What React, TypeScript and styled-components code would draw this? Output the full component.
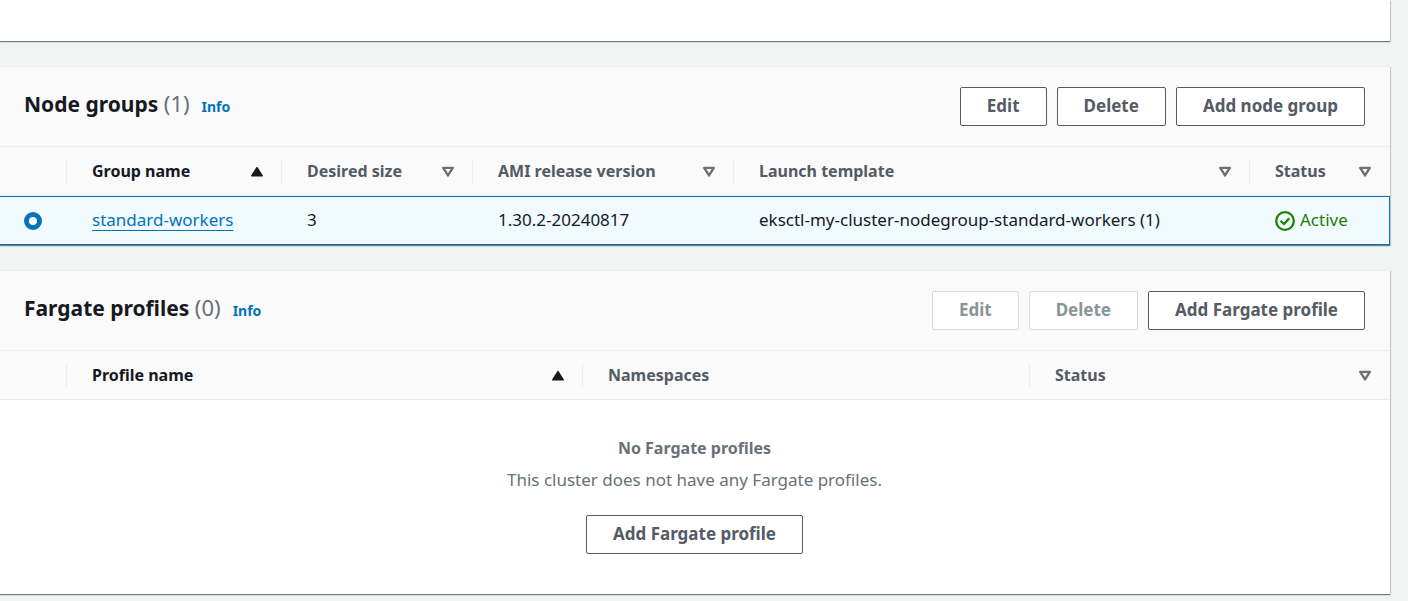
import React, { useState } from "react";
import styled, { createGlobalStyle } from "styled-components";

const color = {
  text: "#16191f",
  label: "#545b64",
  muted: "#687078",
  link: "#0073bb",
  success: "#1d8102",
  disabled: "#879596",
  line: "#eaeded",
  page: "#f2f3f3",
  header: "#fafafa",
  selected: "#f1faff",
};

const GlobalStyle = createGlobalStyle`
  *, *::before, *::after { box-sizing: border-box; }
  body {
    margin: 0;
    background: ${color.page};
    color: ${color.text};
    font-family: "Noto Sans", "Open Sans", sans-serif;
    font-size: 17px;
    line-height: 25px;
  }
`;

const Page = styled.main`
  display: flex;
  flex-direction: column;
  gap: 25px;
  padding: 0 18px 6px 0;
`;

const Panel = styled.section`
  background: #fff;
  border-top: 1px solid ${color.line};
  box-shadow:
    0 1px 1px 0 rgba(0, 28, 36, 0.3),
    1px 1px 1px 0 rgba(0, 28, 36, 0.15),
    -1px 1px 1px 0 rgba(0, 28, 36, 0.15),
    0 1px 0 0 rgba(0, 28, 36, 0.1);
`;

const PreviousPanel = styled(Panel)`
  min-height: 41px;
  border-top: 0;
`;

const PanelHeader = styled.header`
  display: flex;
  align-items: flex-start;
  justify-content: space-between;
  gap: 20px;
  padding: 20px 25px 20px 24px;
  background: ${color.header};
  border-bottom: 1px solid ${color.line};
`;

const TitleGroup = styled.div`
  display: flex;
  align-items: baseline;
  gap: 12px;
`;

const Title = styled.h2`
  margin: 0;
  font-size: 21px;
  font-weight: 700;
  line-height: 32px;
`;

const Count = styled.span`
  color: ${color.muted};
  font-size: 22px;
  font-weight: 400;
`;

const InfoLink = styled.a`
  color: ${color.link};
  font-size: 14px;
  font-weight: 700;
  text-decoration: none;
`;

const Actions = styled.div`
  display: flex;
  gap: 10px;
`;

const Button = styled.button`
  height: 39px;
  padding: 0 26px 2px;
  border: 1px solid ${color.label};
  border-radius: 2px;
  background: #fff;
  color: ${color.label};
  font: inherit;
  font-weight: 700;
  white-space: nowrap;
  cursor: pointer;

  &:disabled {
    border-color: #d5dbdb;
    color: ${color.disabled};
    cursor: default;
  }
`;

const Table = styled.table`
  width: 100%;
  table-layout: fixed;
  border-collapse: separate;
  border-spacing: 0;
`;

const Col = styled.col<{ $width?: string }>`
  width: ${(p) => p.$width ?? "auto"};
`;

const HeadCell = styled.th<{ $active?: boolean }>`
  padding: 12px 0 11px;
  background: ${color.header};
  border-bottom: 1px solid ${color.line};
  color: ${(p) => (p.$active ? color.text : color.label)};
  font-size: 16px;
  font-weight: 700;
  text-align: left;
`;

const HeadInner = styled.div<{ $last?: boolean }>`
  display: flex;
  align-items: center;
  justify-content: space-between;
  height: 25px;
  padding: 0 ${(p) => (p.$last ? 18 : 17)}px 0 25px;
  border-right: ${(p) => (p.$last ? "0" : `1px solid ${color.line}`)};
  white-space: nowrap;
`;

const Cell = styled.td<{ $control?: boolean }>`
  height: 49px;
  padding: ${(p) => (p.$control ? "0 0 0 24px" : "0 0 3px 25px")};
  background: ${color.selected};
  border: solid ${color.link};
  border-width: 1px 0;
  white-space: nowrap;

  &:last-child {
    border-right-width: 1px;
  }
`;

const Radio = styled.input`
  display: block;
  appearance: none;
  width: 18px;
  height: 18px;
  margin: 0;
  border: 1px solid ${color.muted};
  border-radius: 50%;
  background: #fff;

  &:checked {
    border: 5px solid ${color.link};
  }
`;

const NameLink = styled.a`
  color: ${color.link};
  text-decoration: underline 1px;
  text-decoration-skip-ink: none;
  text-underline-offset: 4px;
`;

const Status = styled.span`
  display: flex;
  align-items: center;
  gap: 5px;
  color: ${color.success};

  svg {
    margin-top: 3px;
  }
`;

const Empty = styled.div`
  display: flex;
  flex-direction: column;
  align-items: center;
  padding: 36px 26px 40px 25px;
  color: ${color.muted};
`;

const EmptyTitle = styled.strong`
  font-size: 16px;
  font-weight: 700;
`;

const EmptyText = styled.p`
  margin: 6px 0 23px;
`;

const SortIcon = styled.svg`
  display: block;
  flex: none;
  width: 14px;
  height: 12px;
`;

const SortAscending = () => (
  <SortIcon viewBox="0 0 14 12" aria-hidden="true">
    <path d="M7 1.6 12.3 9.8H1.7Z" fill={color.text} stroke={color.text} strokeWidth="1.4" strokeLinejoin="round" />
  </SortIcon>
);

const SortNone = () => (
  <SortIcon viewBox="0 0 14 12" aria-hidden="true">
    <path d="M2.2 1.9H11.8L7 9.4Z" fill="none" stroke={color.muted} strokeWidth="2.4" strokeLinejoin="round" />
  </SortIcon>
);

const CheckIcon = () => (
  <svg width="20" height="20" viewBox="0 0 20 20" fill="none" stroke={color.success} strokeWidth="2.3" aria-hidden="true">
    <circle cx="10" cy="10" r="8.8" />
    <path d="M5.6 9.9 9 13 14.2 7.4" />
  </svg>
);

type Column = { label: string; width?: string; sort?: "asc" | "none" };

const groupColumns: Column[] = [
  { label: "Group name", width: "215px", sort: "asc" },
  { label: "Desired size", width: "191px", sort: "none" },
  { label: "AMI release version", width: "261px", sort: "none" },
  { label: "Launch template", sort: "none" },
  { label: "Status", width: "140px", sort: "none" },
];

const fargateColumns: Column[] = [
  { label: "Profile name", width: "516px", sort: "asc" },
  { label: "Namespaces", width: "447px" },
  { label: "Status", sort: "none" },
];

const TableHead = ({ columns }: { columns: Column[] }) => (
  <>
    <colgroup>
      <Col $width="67px" />
      {columns.map((c) => (
        <Col key={c.label} $width={c.width} />
      ))}
    </colgroup>
    <thead>
      <tr>
        <HeadCell aria-label="Selection">
          <HeadInner />
        </HeadCell>
        {columns.map((c, i) => (
          <HeadCell
            key={c.label}
            scope="col"
            $active={c.sort === "asc"}
            aria-sort={c.sort === "asc" ? "ascending" : undefined}
          >
            <HeadInner $last={i === columns.length - 1}>
              {c.label}
              {c.sort === "asc" && <SortAscending />}
              {c.sort === "none" && <SortNone />}
            </HeadInner>
          </HeadCell>
        ))}
      </tr>
    </thead>
  </>
);

const Heading = ({ title, count }: { title: string; count: number }) => (
  <TitleGroup>
    <Title>
      {title} <Count>({count})</Count>
    </Title>
    <InfoLink href="#info">Info</InfoLink>
  </TitleGroup>
);

export default function App() {
  const [selected, setSelected] = useState("standard-workers");

  return (
    <>
      <GlobalStyle />
      <Page>
        <PreviousPanel />

        <Panel>
          <PanelHeader>
            <Heading title="Node groups" count={1} />
            <Actions>
              <Button type="button">Edit</Button>
              <Button type="button">Delete</Button>
              <Button type="button">Add node group</Button>
            </Actions>
          </PanelHeader>
          <Table>
            <TableHead columns={groupColumns} />
            <tbody>
              <tr>
                <Cell $control>
                  <Radio
                    type="radio"
                    name="node-group"
                    aria-label="standard-workers"
                    checked={selected === "standard-workers"}
                    onChange={() => setSelected("standard-workers")}
                  />
                </Cell>
                <Cell>
                  <NameLink href="#standard-workers">standard-workers</NameLink>
                </Cell>
                <Cell>3</Cell>
                <Cell>1.30.2-20240817</Cell>
                <Cell>eksctl-my-cluster-nodegroup-standard-workers (1)</Cell>
                <Cell>
                  <Status>
                    <CheckIcon />
                    Active
                  </Status>
                </Cell>
              </tr>
            </tbody>
          </Table>
        </Panel>

        <Panel>
          <PanelHeader>
            <Heading title="Fargate profiles" count={0} />
            <Actions>
              <Button type="button" disabled>Edit</Button>
              <Button type="button" disabled>Delete</Button>
              <Button type="button">Add Fargate profile</Button>
            </Actions>
          </PanelHeader>
          <Table>
            <TableHead columns={fargateColumns} />
          </Table>
          <Empty>
            <EmptyTitle>No Fargate profiles</EmptyTitle>
            <EmptyText>This cluster does not have any Fargate profiles.</EmptyText>
            <Button type="button">Add Fargate profile</Button>
          </Empty>
        </Panel>
      </Page>
    </>
  );
}
